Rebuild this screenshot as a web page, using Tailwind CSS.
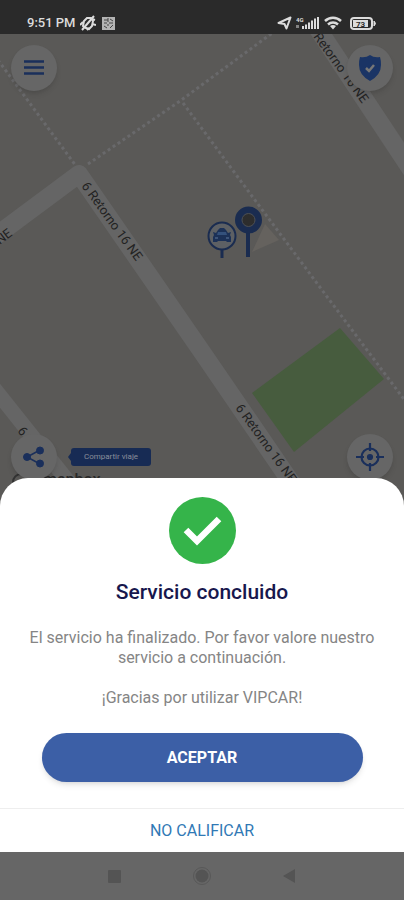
<!DOCTYPE html>
<html lang="es">
<head>
    <meta charset="UTF-8">
    <meta name="viewport" content="width=device-width, initial-scale=1.0">
    <title>VIPCAR</title>
    <script src="https://cdn.jsdelivr.net/npm/@tailwindcss/browser@4"></script>
</head>
<body class="flex min-h-screen flex-col bg-[#5a5957] font-[Roboto,sans-serif]">

    <!-- Status bar -->
    <header class="flex h-[34px] items-center justify-between bg-[#2a2a2a] px-[27px] pt-3 text-[#dcdcdc]">
        <div class="flex items-center gap-1">
            <span class="text-[13px] leading-4 font-medium">9:51 PM</span>
            <svg class="h-4 w-4" viewBox="0 0 16 16" fill="none" stroke="currentColor" stroke-width="2" aria-hidden="true">
                <path d="M3 11l1-5 3-3h4l2 3-1 5-3 3-3-1z" />
                <path d="M14 1L2 15M0 10l3-3M12 4l3 1M12 9l4 1M7 15l2-2" />
            </svg>
            <svg class="ml-[2px] h-[13px] w-[13px]" viewBox="0 0 13 13" fill="none" aria-hidden="true">
                <path fill="#b4b4b4" d="M0 0h13v13H0z" />
                <path stroke="#444" d="M2 3h4M8 2l3 2M2 6h3M7 6h4M2 9l3 2M8 11l3-3M6 1v4M5 8h2" />
            </svg>
        </div>
        <div class="flex items-center gap-1">
            <svg class="h-[14px] w-[15px]" viewBox="0 0 15 14" fill="none" stroke="currentColor" stroke-width="2" stroke-linejoin="round" aria-hidden="true">
                <path d="M1.500 7L13.500 1.500 9.500 12.500 7.500 8z" />
            </svg>
            <svg class="h-[14px] w-[24px]" viewBox="0 0 24 14" fill="currentColor" aria-hidden="true">
                <text x="0" y="6" font-size="6" font-weight="700">4G</text>
                <path d="M0 9h3v3H0z" opacity=".5" />
                <path d="M6 10h2v3H6zM9 8.500h2V13H9zM12 6.500h2V13h-2zM15 4.500h2V13h-2zM18 2.500h2V13h-2zM21 1h2v12h-2z" />
            </svg>
            <svg class="h-[14px] w-[18px]" viewBox="0 0 18 14" fill="none" stroke="currentColor" stroke-width="2.500" aria-hidden="true">
                <path d="M1 5a11.500 11.500 0 0 1 16 0M4 8.500a7.500 7.500 0 0 1 10 0" />
                <path d="M6 10q3-2 6 0l-3 3.500z" fill="currentColor" stroke="none" />
            </svg>
            <svg class="ml-1 h-[13px] w-[27px]" viewBox="0 0 27 13" aria-hidden="true">
                <rect x="1" y="1" width="21" height="11" rx="3" fill="none" stroke="currentColor" stroke-width="2" />
                <path d="M24 4q3 2.500 0 5z" fill="currentColor" stroke="currentColor" />
                <rect x="3" y="3" width="15" height="7" fill="currentColor" />
                <text x="6" y="9.500" font-size="8" font-weight="700" fill="#2a2a2a">73</text>
            </svg>
        </div>
    </header>

    <!-- Map -->
    <main class="relative flex flex-1 flex-col justify-between overflow-hidden px-[11px] pt-[11px] pb-[22px]">
        <svg class="absolute inset-0 h-full w-full" viewBox="0 34 404 468" preserveAspectRatio="xMidYMin slice" aria-hidden="true">
            <rect y="34" width="404" height="468" fill="#5a5957" />
            <path d="M252 393L340 328 384 379 294 452z" fill="#475c3e" />
            <g fill="none" stroke="#656565" stroke-width="18" stroke-linejoin="round">
                <path d="M-15 244L79 174 202 352 306 504" />
                <path d="M-15 377L75 490" stroke-width="15" />
                <path d="M312 20L412 171" />
            </g>
            <g fill="none" stroke="#69696b" stroke-width="3" stroke-dasharray="3 3">
                <path d="M-2 60L76 166" />
                <path d="M88 164L180 101 275 31" />
                <path d="M183 103L240 180 322 290 406 402" />
            </g>
            <g fill="#222222" font-size="13">
                <text transform="translate(81 186) rotate(54)">6 Retorno 16 NE</text>
                <text transform="translate(235 408) rotate(54)">6 Retorno 16 NE</text>
                <text transform="translate(362 104) rotate(54)" text-anchor="end">Retorno 16 NE</text>
                <text transform="translate(13 235) rotate(-37)" text-anchor="end">NE</text>
                <text transform="translate(17 431) rotate(52)">6</text>
            </g>
            <g>
                <circle cx="21" cy="482" r="8" fill="none" stroke="#333333" stroke-width="2" />
                <text x="43" y="485" font-size="16" font-weight="500" fill="#292929">mapbox</text>
            </g>
            <!-- heading cone -->
            <path d="M265 224L279 240 252 252z" fill="#65625e" />
            <!-- taxi pin -->
            <g>
                <path d="M222 249v9" stroke="#1a2c50" stroke-width="3" />
                <circle cx="222" cy="236" r="13.500" fill="#5d6064" stroke="#1a2c50" stroke-width="2" />
                <path d="M218 230l2-2h4l2 2 2 3 3-1-1 3 1 2v5h-4l-1-1h-8l-1 1h-4v-5l1-2-1-3 3 1z" fill="#1c3157" />
                <path d="M218 232h8l1 3h-10z" fill="#34517c" />
                <path d="M215 238h3M226 238h3" stroke="#5f789c" />
            </g>
            <!-- origin pin -->
            <g>
                <path d="M248 232v25" stroke="#1a2c50" stroke-width="4" />
                <circle cx="248.500" cy="220" r="10" fill="#2b2b2b" stroke="#1a2c50" stroke-width="7" />
                <circle cx="248.500" cy="220" r="6.500" fill="#2d2d2d" stroke="#4c5056" />
            </g>
        </svg>

        <div class="relative flex justify-between">
            <button type="button" aria-label="Menú" class="flex h-[46px] w-[46px] items-center justify-center rounded-full bg-[#666666] shadow-md">
                <svg class="h-6 w-6" viewBox="0 0 24 24" stroke="#1a2f5b" stroke-width="2.600" aria-hidden="true">
                    <path d="M2 5.500h20M2 11.500h20M2 17.500h20" />
                </svg>
            </button>
            <button type="button" aria-label="Seguridad" class="flex h-[46px] w-[46px] items-center justify-center rounded-full bg-[#666666] shadow-md">
                <svg class="h-[26px] w-6" viewBox="0 0 24 26" aria-hidden="true">
                    <path d="M12 0q4 3 10 2 1 3 1 8 0 10-11 16Q1 20 1 10q0-5 1-8 6 1 10-2z" fill="#1a3465" />
                    <path d="M8 13l3 3 5-6" fill="none" stroke="#777777" stroke-width="2.500" />
                </svg>
            </button>
        </div>

        <div class="relative flex items-center justify-between">
            <div class="flex items-center gap-[11px]">
                <button type="button" id="share" aria-label="Compartir" class="flex h-[46px] w-[46px] items-center justify-center rounded-full bg-[#666666] shadow-md">
                    <svg class="h-6 w-6" viewBox="0 0 24 24" fill="#1a2f5b" stroke="#1a2f5b" aria-hidden="true">
                        <path d="M18 5L5 12l13 7" fill="none" stroke-width="1.500" />
                        <circle cx="18" cy="5.500" r="3.500" />
                        <circle cx="5" cy="12" r="3.500" />
                        <circle cx="18" cy="18.500" r="3.500" />
                    </svg>
                </button>
                <label for="share" class="flex items-center">
                    <svg class="h-2 w-[3px]" viewBox="0 0 3 8" aria-hidden="true"><path d="M3 0v8L0 4z" fill="#172b54" /></svg>
                    <span class="flex h-[18px] w-20 items-center justify-center rounded-[3px] bg-[#172b54] text-[8px] text-[#8a8f9b]">Compartir viaje</span>
                </label>
            </div>
            <button type="button" aria-label="Mi ubicación" class="flex h-[46px] w-[46px] items-center justify-center rounded-full bg-[#666666] shadow-md">
                <svg class="h-7 w-7" viewBox="0 0 28 28" fill="none" stroke="#1a2f5b" stroke-width="2.200" aria-hidden="true">
                    <circle cx="14" cy="14" r="8.500" />
                    <circle cx="14" cy="14" r="2" fill="#1a2f5b" />
                    <path d="M14 0v8M14 20v8M0 14h8M20 14h8" />
                </svg>
            </button>
        </div>
    </main>

    <!-- Bottom sheet -->
    <section role="dialog" aria-labelledby="title" class="relative -mt-6 rounded-t-[28px] bg-white text-center">
        <div class="flex flex-col items-center px-5 pt-[19px] pb-[26px]">
            <svg class="h-[67px] w-[67px]" viewBox="0 0 67 67" aria-hidden="true">
                <circle cx="33.500" cy="33.500" r="33.500" fill="#35b44a" />
                <path d="M17 33l11 11 22-22" fill="none" stroke="#ffffff" stroke-width="6.500" />
            </svg>
            <h1 id="title" class="mt-4 text-[21px] leading-6 font-medium text-[#17174d]">Servicio concluido</h1>
            <p class="mt-6 text-base leading-5 text-[#858585]">El servicio ha finalizado. Por favor valore nuestro servicio a continuación.</p>
            <p class="mt-5 text-base leading-5 text-[#858585]">¡Gracias por utilizar VIPCAR!</p>
            <button type="button" class="mt-[25px] h-[49px] w-full max-w-[321px] rounded-full bg-[#3c5fa6] text-base font-bold text-white shadow-md">ACEPTAR</button>
        </div>
        <button type="button" class="h-11 w-full border-t border-[#eeeeee] text-base text-[#3079b5]">NO CALIFICAR</button>
    </section>

    <!-- System navigation -->
    <nav class="flex h-12 items-center justify-center gap-[68px] bg-[#666666]">
        <button type="button" aria-label="Recientes" class="h-5 w-5">
            <svg viewBox="0 0 20 20" fill="#545454" aria-hidden="true"><rect x="4" y="4" width="13" height="13" rx="1" /></svg>
        </button>
        <button type="button" aria-label="Inicio" class="h-5 w-5">
            <svg viewBox="0 0 20 20" fill="#545454" aria-hidden="true">
                <circle cx="10" cy="10" r="6.500" />
                <circle cx="10" cy="10" r="8.500" fill="none" stroke="#585858" />
            </svg>
        </button>
        <button type="button" aria-label="Atrás" class="h-5 w-5">
            <svg viewBox="0 0 20 20" fill="#545454" aria-hidden="true"><path d="M15 3v14L3 10z" /></svg>
        </button>
    </nav>
</body>
</html>
